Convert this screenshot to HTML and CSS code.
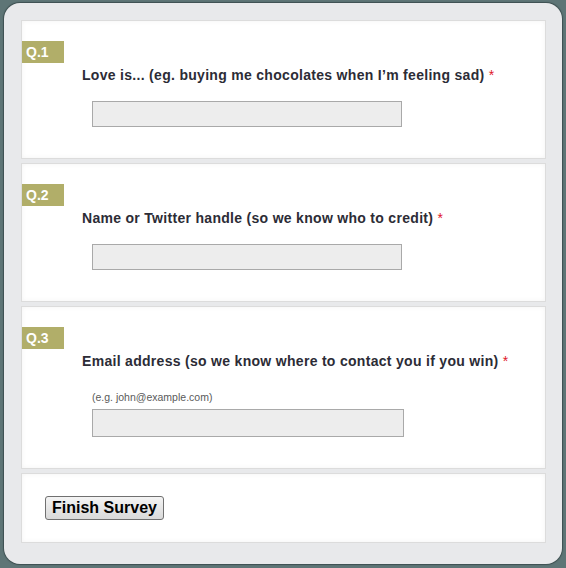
FILE: index.html
```html
<!DOCTYPE html>
<html lang="en">
<head>
    <meta charset="UTF-8">
    <meta name="viewport" content="width=device-width, initial-scale=1.0">
    <title>Survey</title>
    <link rel="stylesheet" href="styles.css">
</head>
<body>
    <div class="survey">
        <form class="survey-form" onsubmit="return false">

            <div class="question">
                <span class="q-num">Q.1</span>
                <label class="q-label" for="love">Love is... (eg. buying me chocolates when I’m feeling sad) <span class="req">*</span></label>
                <input class="q-input" type="text" id="love">
            </div>

            <div class="question">
                <span class="q-num">Q.2</span>
                <label class="q-label" for="name">Name or Twitter handle (so we know who to credit) <span class="req">*</span></label>
                <input class="q-input" type="text" id="name">
            </div>

            <div class="question">
                <span class="q-num">Q.3</span>
                <label class="q-label" for="email">Email address (so we know where to contact you if you win) <span class="req">*</span></label>
                <p class="q-hint">(e.g. john@example.com)</p>
                <input class="q-input wide" type="text" id="email">
            </div>

            <div class="question submit-row">
                <button type="submit">Finish Survey</button>
            </div>

        </form>
    </div>
</body>
</html>
```

FILE: styles.css
```css
*,
*::before,
*::after{
    padding: 0;
    margin: 0;
    box-sizing: border-box;
}
body{
    background-color: #5e7576;
    font-family: "Liberation Sans", Arial, sans-serif;
}
.survey{
    margin: 3px 4px 4px 4px;
    height: 561px;
    background-color: #e8e9eb;
    border-radius: 16px;
    box-shadow: 0 0 1px 1px rgba(40,55,56,0.6);
    padding: 17px 16px 0 17px;
}
.survey-form{
    display: flex;
    flex-direction: column;
    gap: 4px;
}
.question{
    background-color: #ffffff;
    border: 1px solid #dcdcdc;
    box-shadow: inset 0 0 5px rgba(0,0,0,0.05);
    padding: 20px 0 31px 0;
}
.q-num{
    display: block;
    width: 42px;
    height: 22px;
    line-height: 22px;
    padding-left: 4px;
    background-color: #b1ae69;
    color: #ffffff;
    font-size: 14px;
    font-weight: bold;
}
.q-label{
    display: block;
    margin: 4px 0 0 60px;
    line-height: 17px;
    font-size: 14px;
    font-weight: bold;
    letter-spacing: 0.3px;
    color: #2c2c36;
}
.req{
    color: #e0182a;
    font-weight: normal;
}
.q-input{
    display: block;
    margin: 17px 0 0 70px;
    width: 310px;
    height: 26px;
    background-color: #ededed;
    border: 1px solid #a9a9a9;
    outline: none;
}
.q-input.wide{
    width: 312px;
    height: 28px;
    margin-top: 5px;
}
.q-hint{
    margin: 20px 0 0 70px;
    font-size: 10.5px;
    line-height: 14px;
    color: #5a5a5a;
}
.submit-row{
    padding: 22px 0 22px 23px;
}
button{
    height: 24px;
    padding: 0 6px;
    font-family: "Liberation Sans", Arial, sans-serif;
    font-size: 16px;
    font-weight: bold;
    color: #000000;
    border: 1px solid #707070;
    border-radius: 3px;
    background: linear-gradient(#f4f4f4, #e6e6e6 50%, #d9d9d9);
}
```
